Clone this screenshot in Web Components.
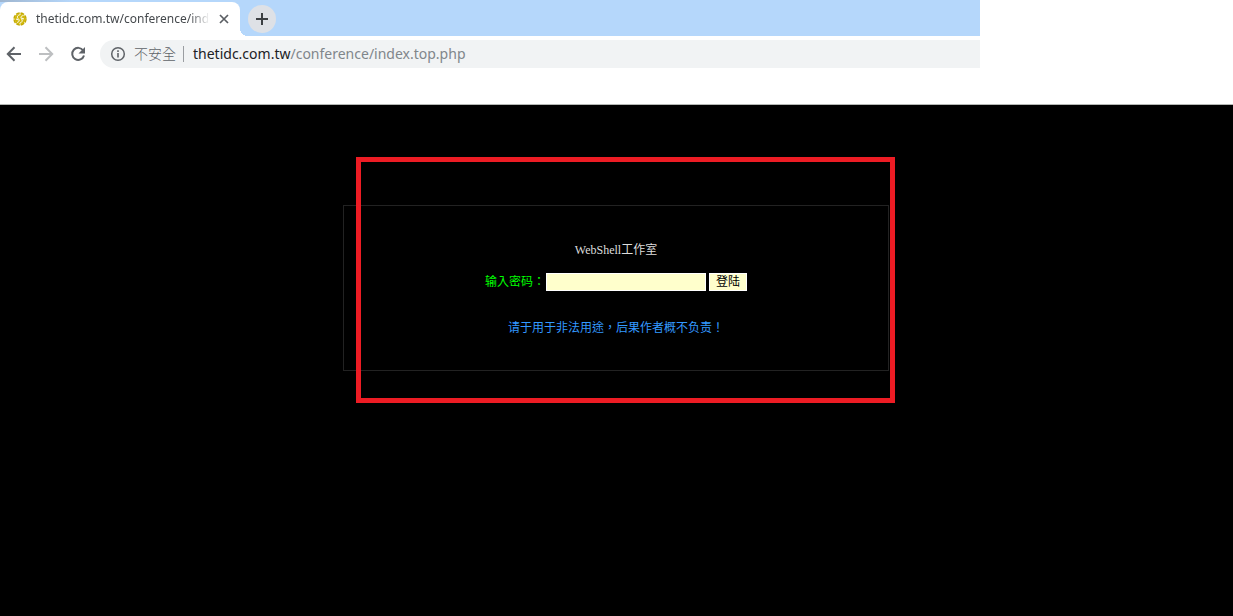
<!DOCTYPE html>
<html lang="zh-Hant">
<head>
<meta charset="utf-8">
<title>thetidc.com.tw/conference/index.top.php</title>
<style>
html, body { margin: 0; height: 100%; }
body { display: flex; flex-direction: column; background: #fff; }
login-page { flex: 1; }
</style>
</head>
<body>
<browser-bar>
  <browser-tab slot="tabs">thetidc.com.tw/conference/index.top.php</browser-tab>
  <address-box slot="address" status="不安全" host="thetidc.com.tw" path="/conference/index.top.php"></address-box>
</browser-bar>
<login-page>
  <login-panel>
    <span slot="title">WebShell工作室</span>
    <span slot="notice">请于用于非法用途，后果作者概不负责！</span>
  </login-panel>
</login-page>

<script>
const define = (name, html, setup) => {
  const t = document.createElement('template');
  t.innerHTML = html;
  customElements.define(name, class extends HTMLElement {
    constructor() {
      super();
      this.attachShadow({ mode: 'open' }).append(t.content.cloneNode(true));
    }
    connectedCallback() { if (setup) setup(this, this.shadowRoot); }
  });
};

define('browser-tab', `
<style>
:host { display: flex; align-items: center; box-sizing: border-box; width: 240px; height: 34px; padding: 0 8px 0 12px; background: #fff; border-radius: 8px 8px 0 0; font: 12px/18px "Noto Sans", "Noto Sans CJK TC", sans-serif; color: #45494d; position: relative; }
:host::after { content: ""; position: absolute; left: 100%; bottom: 0; width: 8px; height: 8px; background: radial-gradient(circle at 100% 0, transparent 8px, #fff 8px); }
.icon { flex: none; width: 16px; height: 16px; margin-right: 8px; }
.name { flex: 1; overflow: hidden; white-space: nowrap; -webkit-mask-image: linear-gradient(90deg, #000 88%, transparent); }
button { flex: none; width: 16px; height: 16px; margin-left: 6px; padding: 0; border: 0; background: none; }
svg { display: block; }
</style>
<svg class="icon" viewBox="0 0 16 16" fill="none"><circle cx="8" cy="8" r="5.500" fill="#d2b90c"/><circle cx="8" cy="8" r="6" stroke="#c4a900" stroke-width="1.400" stroke-dasharray="3.700 1"/><path d="M8.500 3.500C4.500 4.500 5 6.500 6.500 8s.5 3-1.500 3.500M11.500 4.500C8.500 5 8.500 6.500 9.700 8s.3 3.500-2.200 4.500M4 8l2.500 1M9.500 7l2.500 1" stroke="#fff"/></svg>
<span class="name"><slot></slot></span>
<button aria-label="關閉分頁"><svg width="16" height="16"><path d="M4 4l8 8M12 4l-8 8" stroke="#5a5e63" stroke-width="1.700"/></svg></button>`);

define('address-box', `
<style>
:host { display: flex; align-items: center; flex: 1; height: 28px; padding-left: 10px; background: #f1f3f4; border-radius: 14px 0 0 14px; font: 14px/20px "Noto Sans", "Noto Sans CJK TC", sans-serif; color: #80868b; white-space: nowrap; }
svg { flex: none; margin-right: 8px; }
.status { font-weight: 300; color: #5f6368; padding-right: 7px; border-right: 1px solid #9a9da1; line-height: 16px; margin-right: 9px; }
a { color: inherit; text-decoration: none; }
b { font-weight: 400; color: #202124; }
</style>
<svg width="16" height="16" fill="none" stroke="#5f6368"><circle cx="8" cy="8" r="6.300" stroke-width="1.500"/><path d="M8 7v4.500M8 4.300v1.600" stroke-width="1.600"/></svg>
<span class="status"></span><a href="#"><b></b><span class="path"></span></a>`,
(el, root) => {
  root.querySelector('.status').textContent = el.getAttribute('status');
  root.querySelector('b').textContent = el.getAttribute('host');
  root.querySelector('.path').textContent = el.getAttribute('path');
});

define('browser-bar', `
<style>
:host { display: block; background: #fff; padding-bottom: 36px; border-bottom: 1px solid #b4b7b4; }
.window { width: 79.500%; }
.tabs { display: flex; gap: 8px; box-sizing: border-box; height: 36px; padding-top: 2px; background: linear-gradient(90deg, #9fb6d0, #b5d7fb 72px) top / 100% 2px no-repeat, #b5d7fb; }
.tools { display: flex; align-items: center; height: 28px; padding-top: 4px; }
button { flex: none; display: grid; place-items: center; padding: 0; border: 0; background: none; width: 28px; height: 28px; }
.new { margin-top: 3px; border-radius: 50%; background: #dee1e6; }
nav { display: flex; gap: 4px; margin-right: 8px; }
svg { fill: none; stroke: #5f6368; stroke-width: 2; }
.off svg { stroke: #bdbfc1; }
</style>
<div class="window">
<div class="tabs"><slot name="tabs"></slot><button class="new" aria-label="新增分頁"><svg width="14" height="14" style="stroke:#3c4043"><path d="M7 1v12M1 7h12"/></svg></button></div>
<div class="tools"><nav>
<button aria-label="返回"><svg width="16" height="16"><path d="M15 8H2M8.500 1.300L1.800 8l6.700 6.700"/></svg></button>
<button class="off" aria-label="前進"><svg width="16" height="16"><path d="M1 8h13M7.500 1.300L14.200 8l-6.700 6.700"/></svg></button>
<button aria-label="重新載入"><svg width="16" height="16"><path d="M13.200 4.500A6 6 0 1 0 14 9.500"/><path d="M15 1v6.500H8.500z" fill="#5f6368" stroke="none"/></svg></button>
</nav><slot name="address"></slot></div>
</div>`);

define('login-page', `
<style>
:host { display: flex; justify-content: center; align-items: flex-start; padding: 100px 1px 0 0; background: #000; }
</style><slot></slot>`);

define('login-panel', `
<style>
:host { display: block; position: relative; box-sizing: border-box; width: 546px; max-width: 100%; padding: 36px 0 34px; border: 1px solid #222; text-align: center; font: 12px/16px "Liberation Serif", "Noto Sans CJK TC", serif; color: #ddd; }
:host::after { content: ""; position: absolute; inset: -49px -7px -33px 12px; border: 5px solid #ed1c24; pointer-events: none; }
h1, p { margin: 0; font: inherit; }
form { display: flex; justify-content: center; align-items: center; margin: 15px 0 29px; }
label { color: #0f0; }
input, button { box-sizing: border-box; height: 18px; padding: 0; border: 1px solid #fff; background: #ffc; font: inherit; color: #000; }
input { width: 160px; margin: 0 3px 0 1px; }
button { width: 38px; line-height: 16px; }
p { color: #39f; }
</style>
<h1><slot name="title"></slot></h1>
<form><label for="pw">输入密码：</label><input id="pw" type="password"><button type="button">登陆</button></form>
<p><slot name="notice"></slot></p>`);
</script>
</body>
</html>
